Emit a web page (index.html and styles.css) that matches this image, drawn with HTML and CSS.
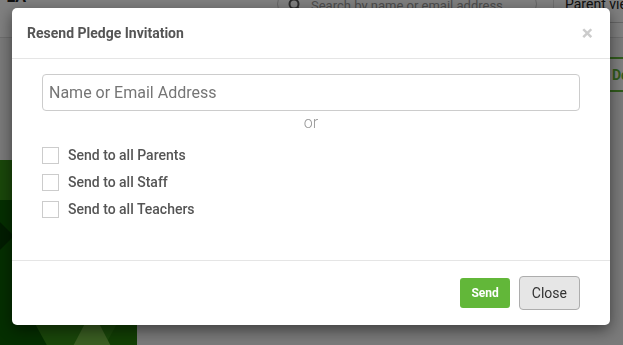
FILE: index.html
```html
<!DOCTYPE html>
<html lang="en">
<head>
  <meta charset="UTF-8">
  <meta name="viewport" content="width=device-width, initial-scale=1.0">
  <title>Resend Pledge Invitation</title>
  <link rel="stylesheet" href="styles.css">
</head>
<body>
  <div class="page">
    <header class="topbar">
      <div class="brand"><span>ACADEMY OF LA</span></div>
      <div class="search">
        <svg class="search-icon" width="14" height="14" viewBox="0 0 14 14">
          <circle cx="6" cy="6" r="4.5" fill="none" stroke="#555" stroke-width="2"/>
          <line x1="9.5" y1="9.5" x2="13" y2="13" stroke="#555" stroke-width="2"/>
        </svg>
        <span class="search-text">Search by name or email address</span>
      </div>
      <div class="divider"></div>
      <div class="view">Parent view</div>
    </header>
    <div class="content">
      <aside class="side">
        <div class="side-art">
          <svg width="137" height="200" viewBox="0 0 137 200">
            <rect width="137" height="200" fill="#0a5e00"/>
            <polygon points="0,0 32,0 12,40 0,40" fill="#348e14"/>
            <polygon points="0,62 14,76 0,90" fill="#043a00"/>
            <polygon points="105,110 137,110 137,200 100,200" fill="#247e08"/>
            <polygon points="22,140 130,140 76,238" fill="#348e14"/>
            <polygon points="92,150 58,215 126,215" fill="#74bc44"/>
          </svg>
        </div>
      </aside>
      <main class="main">
        <div class="toolbar">
          <button class="btn-outline">Download</button>
        </div>
      </main>
    </div>
  </div>

  <div class="backdrop"></div>

  <div class="modal-wrap">
    <div class="modal">
      <div class="modal-header">
        <h4 class="modal-title">Resend Pledge Invitation</h4>
        <span class="close">&times;</span>
      </div>
      <div class="modal-body">
        <input class="field" type="text" placeholder="Name or Email Address">
        <div class="or">or</div>
        <div class="checks">
          <label class="check"><input type="checkbox"><span>Send to all Parents</span></label>
          <label class="check"><input type="checkbox"><span>Send to all Staff</span></label>
          <label class="check"><input type="checkbox"><span>Send to all Teachers</span></label>
        </div>
      </div>
      <div class="modal-footer">
        <button class="btn-send">Send</button>
        <button class="btn-close">Close</button>
      </div>
    </div>
  </div>
</body>
</html>
```

FILE: styles.css
```css
html, body {
  margin: 0;
  padding: 0;
  height: 100%;
  overflow: hidden;
}
body {
  font-family: Roboto, 'Liberation Sans', Arial, sans-serif;
  background: #f5f5f5;
}
.page {
  height: 100%;
}
.topbar {
  height: 37px;
  background: white;
  border-bottom: 1px solid #ddd;
  display: flex;
  align-items: flex-start;
}
.topbar > * {
  flex-shrink: 0;
}
.brand {
  width: 26px;
  display: flex;
  justify-content: flex-end;
  white-space: nowrap;
  margin-top: -13px;
  font-size: 16px;
  font-weight: bold;
  color: #222;
}
.search {
  margin-left: 251px;
  margin-top: -12px;
  width: 260px;
  height: 32px;
  border: 1px solid #ccc;
  border-radius: 16px;
  display: flex;
  align-items: center;
  gap: 9px;
  padding-left: 10px;
  box-sizing: border-box;
  white-space: nowrap;
}
.search-icon {
  margin-top: 2px;
}
.search-text {
  font-size: 13px;
  color: #999;
  margin-top: 2px;
}
.divider {
  width: 1px;
  height: 37px;
  background: #ddd;
  margin-left: 16px;
}
.view {
  margin-left: 11px;
  margin-top: -10px;
  height: 32px;
  line-height: 28px;
  font-size: 14px;
  color: #222;
  white-space: nowrap;
  border-bottom: 1px solid #ccc;
  padding-right: 20px;
}
.content {
  display: flex;
  height: calc(100% - 38px);
}
.side {
  width: 137px;
  flex-shrink: 0;
}
.side-art {
  margin-top: 122px;
  height: 200px;
}
.side-art svg {
  display: block;
}
.main {
  flex: 1;
}
.toolbar {
  display: flex;
  padding-top: 19px;
  padding-left: 461px;
}
.btn-outline {
  flex-shrink: 0;
  height: 35px;
  background: white;
  border: 2px solid #62b739;
  color: #62b739;
  font-family: Roboto, sans-serif;
  font-weight: bold;
  font-size: 14px;
  padding: 0 12px;
  border-radius: 3px;
}
.backdrop {
  position: fixed;
  inset: 0;
  background: rgba(0, 0, 0, 0.5);
}
.modal-wrap {
  position: fixed;
  inset: 0;
  padding: 8px 13px 0 12px;
}
.modal {
  width: 598px;
  background: white;
  border-radius: 5px;
  box-shadow: 0 5px 15px rgba(0, 0, 0, 0.5);
}
.modal-header {
  display: flex;
  align-items: center;
  justify-content: space-between;
  padding: 15px 15px 15px 15px;
  border-bottom: 1px solid #e5e5e5;
}
.modal-title {
  margin: 0;
  font-size: 14px;
  line-height: 20px;
  font-weight: bold;
  color: #555;
}
.close {
  font-size: 21px;
  line-height: 20px;
  font-weight: bold;
  color: #ccc;
  margin-right: 2px;
}
.modal-body {
  padding: 15px 30px 15px 30px;
}
.field {
  display: block;
  width: 100%;
  height: 37px;
  box-sizing: border-box;
  border: 1px solid #ccc;
  border-radius: 4px;
  padding: 6px 6px;
  font-family: Roboto, sans-serif;
  font-size: 16px;
  color: #555;
  outline: none;
}
.field::placeholder {
  color: #757575;
}
.or {
  text-align: center;
  font-size: 16px;
  font-weight: 300;
  line-height: 24px;
  color: #999;
}
.checks {
  display: flex;
  flex-direction: column;
  gap: 7px;
  margin: 10px 0 26px 0;
}
.check {
  display: flex;
  align-items: center;
  gap: 9px;
  height: 20px;
  font-size: 14px;
  font-weight: 500;
  color: #555;
}
.check input {
  appearance: none;
  margin: 0;
  width: 17px;
  height: 17px;
  border: 1px solid #ccc;
  background: white;
}
.modal-footer {
  display: flex;
  justify-content: flex-end;
  align-items: center;
  gap: 9px;
  padding: 15px 30px;
  border-top: 1px solid #e5e5e5;
}
.btn-send {
  height: 30px;
  padding: 0 11px;
  background: #62b739;
  border: none;
  border-radius: 3px;
  color: white;
  font-family: Roboto, sans-serif;
  font-size: 12px;
  font-weight: bold;
}
.btn-close {
  height: 34px;
  padding: 0 12px;
  background: #e6e6e6;
  border: 1px solid #adadad;
  border-radius: 4px;
  color: #333;
  font-family: Roboto, sans-serif;
  font-size: 14px;
}
```
